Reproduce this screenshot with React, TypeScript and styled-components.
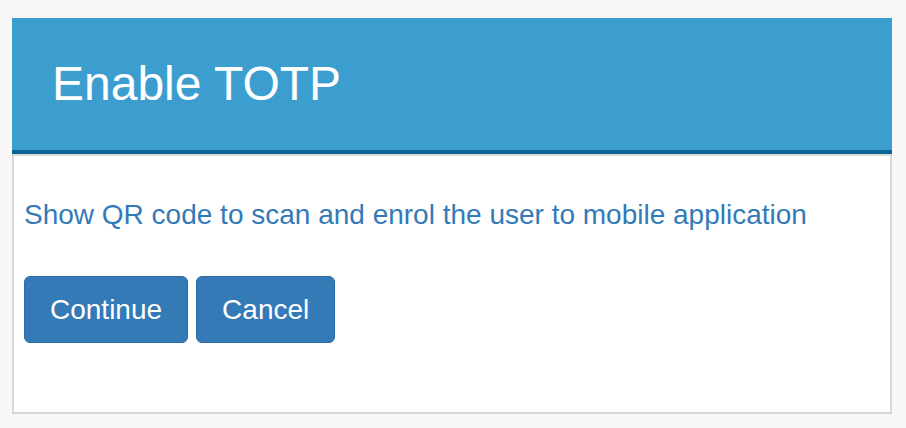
import React from 'react';
import styled, { createGlobalStyle } from 'styled-components';

const GlobalStyle = createGlobalStyle`
  html,
  body {
    margin: 0;
    padding: 0;
    background: #f8f8f8;
  }
  body {
    font-family: 'Liberation Sans', Arial, sans-serif;
  }
`;

const Page = styled.div`
  padding: 18px 14px 14px 12px;
`;

const Header = styled.header`
  box-sizing: border-box;
  height: 136px;
  padding: 40px 40px 0;
  background: #3c9ecf;
  border-bottom: 4px solid #0b6398;
`;

const Title = styled.h1`
  margin: 0;
  font-size: 48px;
  font-weight: 400;
  line-height: 1.1;
  color: #fff;
`;

const Panel = styled.section`
  box-sizing: border-box;
  height: 260px;
  padding: 39px 10px 0;
  background: #fff;
  border: 2px solid #d8d8d8;
`;

const Lead = styled.p`
  margin: 0 0 41px;
  font-size: 28px;
  line-height: 40px;
  color: #337ab7;
`;

const Actions = styled.div`
  display: flex;
  gap: 8px;
`;

const Button = styled.button`
  padding: 12px 25px;
  font-family: inherit;
  font-size: 28px;
  line-height: 41px;
  color: #fff;
  background: #337ab7;
  border: 1px solid #2e6da4;
  border-radius: 6px;
  cursor: pointer;
`;

export default function App() {
  return (
    <>
      <GlobalStyle />
      <Page>
        <Header>
          <Title>Enable TOTP</Title>
        </Header>
        <Panel>
          <Lead>Show QR code to scan and enrol the user to mobile application</Lead>
          <Actions>
            <Button type="button">Continue</Button>
            <Button type="button">Cancel</Button>
          </Actions>
        </Panel>
      </Page>
    </>
  );
}
